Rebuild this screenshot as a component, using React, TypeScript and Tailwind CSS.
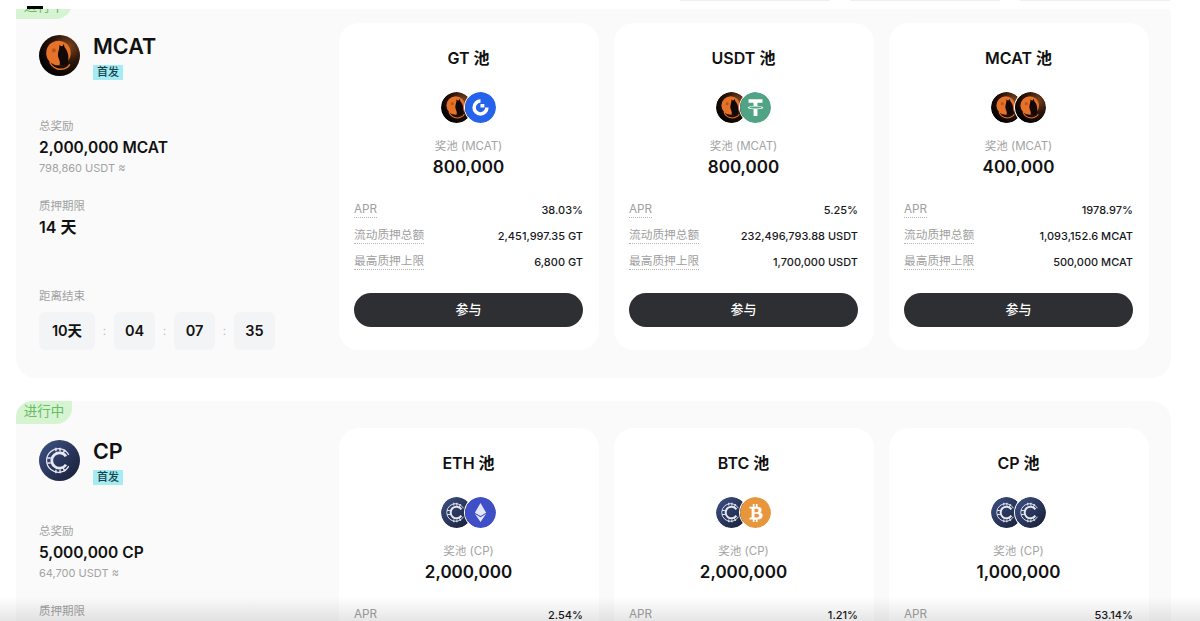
import { FaBtc, FaEthereum } from "react-icons/fa";

const fontStack = { fontFamily: 'Inter, "Noto Sans CJK SC", sans-serif' };

function McatLogo({ className }: { className?: string }) {
  return (
    <svg viewBox="0 0 40 40" className={className}>
      <defs>
        <radialGradient id="mcatBg" cx="72%" cy="28%" r="75%">
          <stop offset="0%" stopColor="#7d4520" />
          <stop offset="50%" stopColor="#2e160a" />
          <stop offset="100%" stopColor="#050302" />
        </radialGradient>
      </defs>
      <circle cx="20" cy="20" r="20" fill="url(#mcatBg)" />
      <circle cx="19" cy="17.500" r="12" fill="#e6722a" />
      <path d="M20 9.500l1.500 1.500 1.800-.3.700-2.200 1 3.500c3.500 4 5 10 2.500 17.500h-7.500c1.500-4-1.500-6.500-1.500-10 0-3.500 1.500-5 1.500-10z" fill="#120805" />
      <path d="M10.500 26c2 7 11 9.500 17 5.500 1.200-.8 2-1.800 2.500-3" fill="none" stroke="#e6722a" strokeWidth="1.400" />
      <circle cx="14.500" cy="15" r="2" fill="#b9561d" />
    </svg>
  );
}

function CpLogo({ className }: { className?: string }) {
  return (
    <svg viewBox="0 0 40 40" className={className}>
      <defs>
        <linearGradient id="cpBg" x1="0" y1="0" x2="1" y2="1">
          <stop offset="0%" stopColor="#3f5288" />
          <stop offset="100%" stopColor="#161d33" />
        </linearGradient>
      </defs>
      <circle cx="20" cy="20" r="20" fill="url(#cpBg)" />
      <path d="M29 14.500A11.500 11.500 0 1 0 29 25.500" fill="none" stroke="#e6e9f2" strokeWidth="1.200" />
      <path d="M26.300 16A7.500 7.500 0 1 0 26.300 24" fill="none" stroke="#e6e9f2" strokeWidth="2.600" />
      <path d="M8 17.500h3.500M8 22.500h3.500M16.500 7.500v3.500M20.500 7.500v3.500M16.500 29v3.500M20.500 29v3.500M25.500 9.500l-2 3M25.500 30.500l-2-3" stroke="#e6e9f2" strokeWidth="1.400" />
    </svg>
  );
}

function GateLogo() {
  return (
    <svg viewBox="0 0 40 40" className="w-full h-full">
      <circle cx="20" cy="20" r="20" fill="#2563eb" />
      <path d="M20 9.500a10.500 10.500 0 1 0 10.500 10.500H26a6 6 0 1 1-6-6z" fill="#fff" />
      <path d="M20 15.500h5v4.500h-5z" fill="#fff" />
    </svg>
  );
}

function TetherLogo() {
  return (
    <svg viewBox="0 0 40 40" className="w-full h-full">
      <circle cx="20" cy="20" r="20" fill="#50a385" />
      <path d="M11 9.500h18v4.500h-6.500v4.200c4 .2 7.500 1 7.500 2s-3.500 1.800-7.500 2V31h-5v-8.800c-4-.2-7.500-1-7.500-2s3.500-1.800 7.500-2V14H11z" fill="#fff" />
      <ellipse cx="20" cy="20" rx="8" ry="1.300" fill="#50a385" />
    </svg>
  );
}

function CoinBadge({ type }: { type: string }) {
  if (type === "gt") return <GateLogo />;
  if (type === "usdt") return <TetherLogo />;
  if (type === "eth")
    return (
      <div className="w-full h-full rounded-full bg-[#3f4fc5] flex items-center justify-center text-[#e4e7fb]">
        <FaEthereum size={19} />
      </div>
    );
  if (type === "btc")
    return (
      <div className="w-full h-full rounded-full bg-[#e8963c] flex items-center justify-center text-white">
        <FaBtc size={18} />
      </div>
    );
  if (type === "mcat") return <McatLogo className="w-full h-full" />;
  return <CpLogo className="w-full h-full" />;
}

type Pool = {
  name: string;
  coin: string;
  prize: string;
  apr: string;
  total?: string;
  cap?: string;
};

type Project = {
  token: string;
  reward: string;
  usdt: string;
  logo: "mcat" | "cp";
  pools: Pool[];
};

const projects: Project[] = [
  {
    token: "MCAT",
    reward: "2,000,000 MCAT",
    usdt: "798,860 USDT ≈",
    logo: "mcat",
    pools: [
      { name: "GT 池", coin: "gt", prize: "800,000", apr: "38.03%", total: "2,451,997.35 GT", cap: "6,800 GT" },
      { name: "USDT 池", coin: "usdt", prize: "800,000", apr: "5.25%", total: "232,496,793.88 USDT", cap: "1,700,000 USDT" },
      { name: "MCAT 池", coin: "mcat", prize: "400,000", apr: "1978.97%", total: "1,093,152.6 MCAT", cap: "500,000 MCAT" },
    ],
  },
  {
    token: "CP",
    reward: "5,000,000 CP",
    usdt: "64,700 USDT ≈",
    logo: "cp",
    pools: [
      { name: "ETH 池", coin: "eth", prize: "2,000,000", apr: "2.54%" },
      { name: "BTC 池", coin: "btc", prize: "2,000,000", apr: "1.21%" },
      { name: "CP 池", coin: "cp", prize: "1,000,000", apr: "53.14%" },
    ],
  },
];

function StatRow({ label, value }: { label: string; value: string }) {
  return (
    <div className="flex items-center justify-between h-[26px]">
      <span className="text-[11.7px] leading-[15px] text-[#a0a0a0] border-b border-dotted border-[#b5b5b5]">
        {label}
      </span>
      <span className="text-[11px] font-medium text-[#18191b]">{value}</span>
    </div>
  );
}

function PoolCard({ pool, token, logo }: { pool: Pool; token: string; logo: string }) {
  return (
    <div className="w-[260px] h-[327px] rounded-[20px] bg-white pl-[15px] pr-[16px] pt-[23px] flex flex-col">
      <div className="text-center text-[16px] leading-[24px] font-semibold text-[#111]">{pool.name}</div>
      <div className="flex justify-center mt-[22px]">
        <div className="w-[31px] h-[31px] rounded-full overflow-hidden">
          <CoinBadge type={logo} />
        </div>
        <div className="w-[31px] h-[31px] -ml-[7px] rounded-full overflow-hidden ring-1 ring-white z-10">
          <CoinBadge type={pool.coin} />
        </div>
      </div>
      <div className="text-center text-[11.5px] leading-[16px] text-[#a3a3a3] mt-[15px]">奖池 ({token})</div>
      <div className="text-center text-[17px] leading-[26px] font-semibold text-[#111]">{pool.prize}</div>
      <div className="mt-[17px]">
        <StatRow label="APR" value={pool.apr} />
        {pool.total && <StatRow label="流动质押总额" value={pool.total} />}
        {pool.cap && <StatRow label="最高质押上限" value={pool.cap} />}
      </div>
      <button className="mt-[18px] h-[34px] w-full rounded-full bg-[#2e2f33] text-white text-[13px] font-medium">
        参与
      </button>
    </div>
  );
}

function Countdown() {
  const cells = ["10天", "04", "07", "35"];
  return (
    <div className="flex items-center mt-[8px]">
      {cells.map((c, i) => (
        <div key={c} className="flex items-center">
          {i > 0 && <span className="w-[19px] text-center text-[12px] text-[#c4c4c4]">:</span>}
          <div
            className={`h-[38px] ${i === 0 ? "w-[56px]" : "w-[41px]"} rounded-[6px] bg-[#f3f4f6] flex items-center justify-center text-[14.5px] font-semibold text-[#111]`}
          >
            {c}
          </div>
        </div>
      ))}
    </div>
  );
}

function ProjectPanel({ project }: { project: Project }) {
  return (
    <div className="relative w-[1155px] rounded-[20px] bg-[#fafafa] pl-[23px] pr-[22px] pt-[27px] pb-[28px] flex">
      <div className="absolute left-0 top-0 w-[56px] h-[23px] rounded-tl-[16px] rounded-br-[16px] bg-[#d6f3d2] text-[#66bd63] text-[13.5px] leading-[21px] text-center">
        进行中
      </div>
      <div className="w-[300px] h-[327px] pt-[12px] flex flex-col">
        <div className="flex items-start gap-[13px]">
          <div className="w-[41px] h-[41px]">
            {project.logo === "mcat" ? <McatLogo className="w-full h-full" /> : <CpLogo className="w-full h-full" />}
          </div>
          <div>
            <div className="text-[21.5px] leading-[24px] font-semibold text-[#111] -mt-[1px]">{project.token}</div>
            <div className="mt-[7px] w-[30px] h-[15px] bg-[#a6eaf2] text-[#14444c] text-[11px] leading-[15px] text-center font-medium">
              首发
            </div>
          </div>
        </div>
        <div className="mt-[38px] text-[11.5px] leading-[16px] text-[#a0a0a0]">总奖励</div>
        <div className="mt-[2px] text-[15.5px] leading-[24px] font-semibold text-[#111]">{project.reward}</div>
        <div className="text-[11px] leading-[16px] text-[#a3a3a3]">{project.usdt}</div>
        <div className="mt-[22px] text-[11.5px] leading-[16px] text-[#a0a0a0]">质押期限</div>
        <div className="mt-[1px] text-[16px] leading-[24px] font-semibold text-[#111]">14 天</div>
        <div className="mt-[49px] text-[11.5px] leading-[16px] text-[#a0a0a0]">距离结束</div>
        <Countdown />
      </div>
      <div className="flex gap-[15px]">
        {project.pools.map((p) => (
          <PoolCard key={p.name} pool={p} token={project.token} logo={project.logo} />
        ))}
      </div>
    </div>
  );
}

export default function App() {
  return (
    <div className="relative w-[1200px] h-[621px] overflow-hidden bg-white" style={fontStack}>
      <div className="flex flex-col gap-[23px] pl-[16px] -mt-[4px]">
        {projects.map((p) => (
          <ProjectPanel key={p.token} project={p} />
        ))}
      </div>

      {/* sticky header, only its bottom edge is in view */}
      <div className="absolute top-0 left-0 right-0 h-[9px] bg-white">
        <div className="absolute left-[27px] top-[6px] w-[16px] h-[3px] bg-black" />
        <div className="absolute left-[680px] top-0 w-[150px] h-[1px] bg-[#f0f0f0]" />
        <div className="absolute left-[850px] top-0 w-[150px] h-[1px] bg-[#f0f0f0]" />
        <div className="absolute left-[1020px] top-0 w-[150px] h-[1px] bg-[#f0f0f0]" />
      </div>

      {/* bottom bar shadow */}
      <div className="absolute bottom-0 left-0 right-0 h-[24px] bg-gradient-to-b from-transparent to-black/10" />
    </div>
  );
}
